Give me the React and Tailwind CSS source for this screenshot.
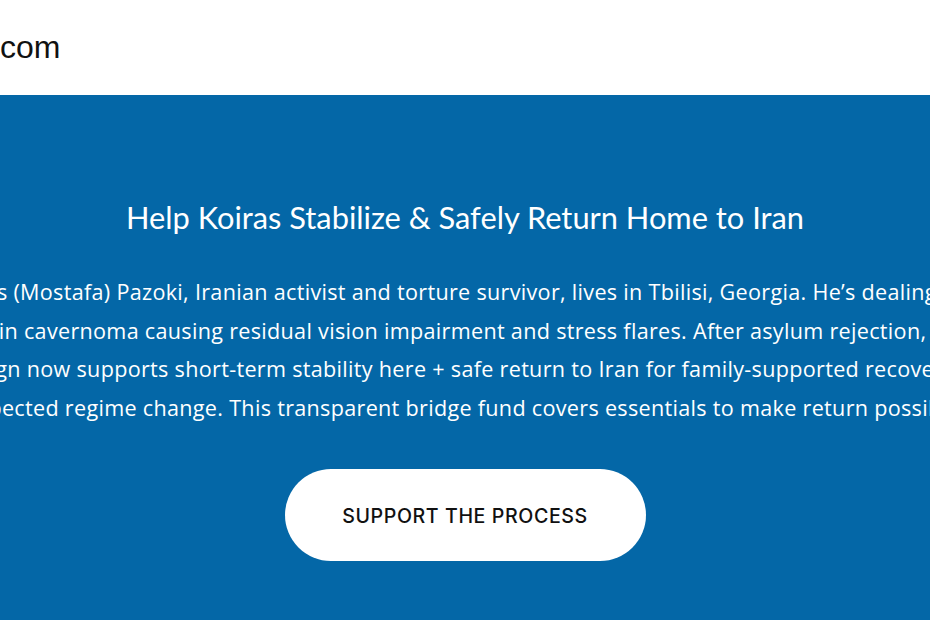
import React from "react";

const lines = [
  "Koiras (Mostafa) Pazoki, Iranian activist and torture survivor, lives in Tbilisi, Georgia. He’s dealing with",
  "brain cavernoma causing residual vision impairment and stress flares. After asylum rejection, the",
  "campaign now supports short-term stability here + safe return to Iran for family-supported recovery after",
  "expected regime change. This transparent bridge fund covers essentials to make return possible.",
];

export default function App() {
  return (
    <div className="w-[930px] h-[620px] overflow-hidden bg-[#0467a7]">
      {/* header */}
      <header className="h-[95px] bg-white flex items-center">
        <span className="ml-[-9px] mt-[-2px] text-[32px] text-[#111] font-['Liberation_Sans',Arial,sans-serif]">
          .com
        </span>
      </header>

      {/* hero */}
      <section className="flex flex-col items-center pt-[103px] text-white">
        <h1 className="text-[30.8px] leading-[40px] font-['Lato',sans-serif]">
          Help Koiras Stabilize &amp; Safely Return Home to Iran
        </h1>

        <div className="mt-[35px] flex flex-col items-center text-[21.6px] leading-[38.7px] tracking-[0.3px] font-['Open_Sans',sans-serif]">
          {lines.map((l) => (
            <p key={l} className="whitespace-nowrap">
              {l}
            </p>
          ))}
        </div>

        <button className="mt-[41px] w-[361px] h-[92px] rounded-full bg-white text-[#111] text-[19.6px] font-medium tracking-[0.6px] font-['Inter',sans-serif]">
          <span className="relative top-[2px]">SUPPORT THE PROCESS</span>
        </button>
      </section>
    </div>
  );
}
